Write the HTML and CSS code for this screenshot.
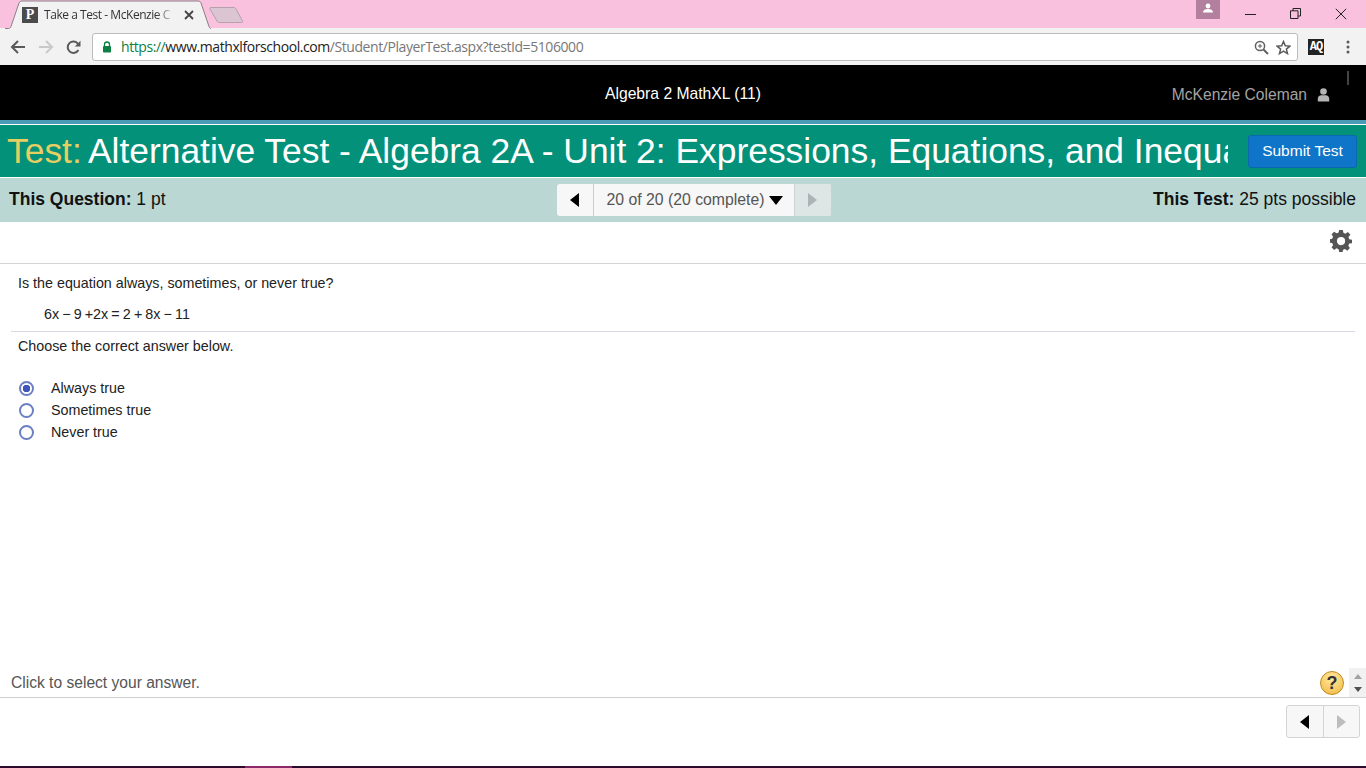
FILE: index.html
```html
<!DOCTYPE html>
<html lang="en">
<head>
<meta charset="utf-8">
<title>Take a Test - McKenzie Coleman</title>
<link rel="stylesheet" href="styles.css">
</head>
<body>
<div class="tabstrip">
  <div class="tab">
    <svg class="tab-shape" width="206" height="29" viewBox="0 0 206 29"><path d="M0 28.5H3.5C5 28.5 5.500 27.500 6 26.500L14 3C14.600 1.800 15.500 1 17 1H193C194.500 1 195.400 1.800 196 3L204 26.500C204.500 27.500 205 28.500 206 28.500" fill="#f2f2f2" stroke="#8a7f85"/></svg>
    <span class="favicon">P</span>
    <span class="tab-title">Take a Test - McKenzie C</span>
    <svg class="tab-close" width="10" height="10" viewBox="0 0 10 10"><path d="M1 1L9 9M9 1L1 9" stroke="#444" stroke-width="1.800"/></svg>
  </div>
  <svg class="newtab" width="36" height="18" viewBox="0 0 36 18"><path d="M2 1.500H25C26 1.500 26.500 2 27 3L33.500 15C34 16 33.500 16.500 32.500 16.500H10C9 16.500 8.500 16 8 15L1 3C.6 2 1 1.500 2 1.500Z" fill="#dcc5d2" stroke="#b5a0ac"/></svg>
  <div class="spacer"></div>
  <div class="profile"><svg width="12" height="10" viewBox="0 0 12 10"><circle cx="6" cy="3" r="2.400" fill="#fff"/><path d="M1 9.500C1 7 3.500 6 6 6S11 7 11 9.500Z" fill="#fff"/></svg></div>
  <div class="winbtn"><svg width="11" height="11" viewBox="0 0 11 11"><path d="M0 6.500H11" stroke="#222"/></svg></div>
  <div class="winbtn"><svg width="11" height="11" viewBox="0 0 11 11"><path d="M.5 2.800H8V10.500H.5ZM3 2.800V.5H10.500V8H8" fill="none" stroke="#222"/></svg></div>
  <div class="winbtn"><svg width="12" height="12" viewBox="0 0 12 12"><path d="M.8 .8L11.200 11.200M11.200 .8L.8 11.200" stroke="#222"/></svg></div>
</div>

<div class="toolbar">
  <svg class="nav-icon" width="16" height="14" viewBox="0 0 16 14"><path d="M15 7H2.500M8 1L2 7L8 13" fill="none" stroke="#5a5a5a" stroke-width="2"/></svg>
  <svg class="nav-icon" width="16" height="14" viewBox="0 0 16 14"><path d="M1 7H13.500M8 1L14 7L8 13" fill="none" stroke="#c9c9c9" stroke-width="2"/></svg>
  <svg class="nav-icon" width="15" height="15" viewBox="0 0 15 15"><path d="M12.400 10A5.700 5.700 0 1 1 12 3.800" fill="none" stroke="#5a5a5a" stroke-width="2"/><path d="M14.500 .8V6.500H8.800Z" fill="#5a5a5a"/></svg>
  <div class="omnibox">
    <svg class="lock" width="10" height="12" viewBox="0 0 10 12"><path d="M2.500 5V3.500a2.500 2.500 0 0 1 5 0V5" fill="none" stroke="#0b8043" stroke-width="1.300"/><rect x="1" y="5" width="8" height="6.500" rx=".8" fill="#0b8043"/></svg>
    <span class="url"><span class="url-scheme">https://</span><span class="url-host">www.mathxlforschool.com</span><span class="url-path">/Student/PlayerTest.aspx?testId=5106000</span></span>
    <svg class="zoom-icon" width="15" height="15" viewBox="0 0 15 15"><circle cx="6" cy="6" r="4.600" fill="none" stroke="#5f5f5f" stroke-width="1.500"/><path d="M9.500 9.500L14 14" stroke="#5f5f5f" stroke-width="2"/><path d="M3.800 6H8.200M6 3.800V8.200" stroke="#5f5f5f"/></svg>
    <svg class="star-icon" width="15" height="15" viewBox="0 0 15 15"><path d="M7.500 1.500L9.300 5.700L13.900 6.100L10.400 9.100L11.500 13.600L7.500 11.200L3.500 13.600L4.600 9.100L1.100 6.100L5.700 5.700Z" fill="none" stroke="#5a5a5a" stroke-width="1.500"/></svg>
  </div>
  <span class="ext">AQ</span>
  <svg class="menu-dots" width="4" height="14" viewBox="0 0 4 14"><circle cx="2" cy="2" r="1.500" fill="#5a5a5a"/><circle cx="2" cy="7" r="1.500" fill="#5a5a5a"/><circle cx="2" cy="12" r="1.500" fill="#5a5a5a"/></svg>
</div>

<header class="site-header">
  <div class="course">Algebra 2 MathXL (11)</div>
  <div class="user">
    <span>McKenzie Coleman</span>
    <svg width="13" height="14" viewBox="0 0 13 14"><circle cx="6.500" cy="3.500" r="3.300" fill="#b5b5b5"/><path d="M.8 13.500V10.500C.8 8.500 2.500 7.200 4 7.200H9C10.500 7.200 12.200 8.500 12.200 10.500V13.500Z" fill="#b5b5b5"/></svg>
  </div>
  <span class="header-tick"></span>
</header>

<section class="title-bar">
  <h1 class="test-title"><span class="test-label">Test:</span> Alternative Test - Algebra 2A - Unit 2: Expressions, Equations, and Inequa</h1>
  <button class="submit">Submit Test</button>
</section>

<section class="status-bar">
  <div class="status-left"><b>This Question:</b> 1 pt</div>
  <div class="pager">
    <span class="pager-arrow"><i class="tri-left"></i></span>
    <span class="pager-label">20 of 20 (20 complete)<i class="tri-down"></i></span>
    <span class="pager-arrow disabled"><i class="tri-right"></i></span>
  </div>
  <div class="status-right"><b>This Test:</b> 25 pts possible</div>
</section>

<div class="tools">
  <svg width="22" height="22" viewBox="0 0 24 24"><path fill="#555" fill-rule="evenodd" d="M10 1h4l.6 3a8.500 8.500 0 0 1 2.300 1l2.600-1.700 2.800 2.800L20 8.700a8.500 8.500 0 0 1 1 2.300l3 .6v3.800l-3 .4a8.500 8.500 0 0 1-1 2.300l1.700 2.600-2.800 2.800-2.600-1.700a8.500 8.500 0 0 1-2.300 1L14 25h-4l-.6-3a8.500 8.500 0 0 1-2.300-1l-2.600 1.700-2.800-2.800L3.400 17.500a8.500 8.500 0 0 1-1-2.300L0 14.800V11l2.400-.4a8.500 8.500 0 0 1 1-2.300L1.700 5.700l2.800-2.800L7.100 4.600a8.500 8.500 0 0 1 2.300-1ZM12 8.500a4.500 4.500 0 1 0 0 9 4.500 4.500 0 0 0 0-9Z" transform="translate(0 -1)"/></svg>
</div>

<main class="question">
  <p class="prompt">Is the equation always, sometimes, or never true?</p>
  <p class="equation">6x − 9 +2x = 2 + 8x − 11</p>
  <p class="choose">Choose the correct answer below.</p>
  <ul class="options">
    <li class="option"><span class="radio checked"></span>Always true</li>
    <li class="option"><span class="radio"></span>Sometimes true</li>
    <li class="option"><span class="radio"></span>Never true</li>
  </ul>
</main>

<div class="hint-bar">
  <span class="hint">Click to select your answer.</span>
  <span class="help">?</span>
  <div class="scroller"><i class="sc-up"></i><i class="sc-down"></i></div>
</div>

<footer class="footer">
  <div class="foot-pager">
    <span class="foot-btn"><i class="tri-left"></i></span>
    <span class="foot-btn disabled"><i class="tri-right"></i></span>
  </div>
</footer>
<div class="taskbar"></div>
</body>
</html>
```

FILE: styles.css
```css
* { box-sizing: border-box; }
html, body { margin: 0; padding: 0; }
body {
  width: 1366px;
  height: 768px;
  overflow: hidden;
  display: flex;
  flex-direction: column;
  background: #fff;
  color: #222;
  font-family: "Liberation Sans", Arial, sans-serif;
}

/* browser chrome */
.tabstrip {
  height: 28px;
  flex: none;
  display: flex;
  align-items: flex-start;
  background: #f9c1de;
  padding: 0 3px 0 5px;
}
.tab {
  position: relative;
  width: 206px;
  height: 29px;
  flex: none;
  display: flex;
  align-items: center;
  padding: 1px 0 0 17px;
  z-index: 1;
}
.tab-shape { position: absolute; left: 0; top: 0; }
.favicon {
  position: relative;
  width: 16px;
  height: 16px;
  background: #4b4b4b;
  color: #fff;
  font: 700 14px/16px "Liberation Serif", serif;
  text-align: center;
}
.tab-title {
  position: relative;
  margin-left: 6px;
  width: 134px;
  font: 12px/16px "Open Sans", sans-serif;
  letter-spacing: -.45px;
  color: #333;
  white-space: nowrap;
  overflow: hidden;
  -webkit-mask-image: linear-gradient(90deg, #000 112px, transparent 132px);
  mask-image: linear-gradient(90deg, #000 112px, transparent 132px);
}
.tab-close { position: relative; margin-left: 6px; }
.newtab { margin: 6px 0 0 -2px; flex: none; }
.spacer { flex: 1; }
.profile {
  width: 24px;
  height: 19px;
  background: #b27f9e;
  display: flex;
  justify-content: center;
  padding-top: 3px;
  margin-right: 8px;
}
.winbtn {
  width: 45px;
  height: 27px;
  display: flex;
  align-items: center;
  justify-content: center;
}
.toolbar {
  height: 37px;
  flex: none;
  display: flex;
  align-items: center;
  background: #f2f2f2;
  padding: 1px 0 0 10px;
}
.nav-icon { flex: none; margin-right: 12px; }
.nav-icon + .nav-icon + .nav-icon { margin-left: 0; margin-right: 11px; }
.omnibox {
  width: 1206px;
  height: 28px;
  flex: none;
  display: flex;
  align-items: center;
  background: #fff;
  border: 1px solid #bcbcbc;
  border-radius: 3px;
  padding: 0 6px 0 9px;
}
.lock { flex: none; }
.url {
  flex: 1;
  margin-left: 9px;
  font: 14px/18px "Open Sans", sans-serif;
  letter-spacing: -.43px;
  white-space: nowrap;
}
.url-scheme { color: #0b8043; }
.url-host { color: #222; }
.url-path { color: #777; }
.zoom-icon { margin-right: 7px; }
.ext {
  width: 16px;
  height: 16px;
  margin-left: 10px;
  background: #222;
  color: #fff;
  font: 700 12px/16px "Liberation Mono", monospace;
  letter-spacing: -1px;
  text-align: center;
  flex: none;
}
.menu-dots { margin-left: 22px; flex: none; }

/* site header */
.site-header {
  height: 55px;
  flex: none;
  position: relative;
  background: #000;
  display: flex;
  align-items: center;
  justify-content: center;
  padding-top: 2px;
}
.course {
  color: #fff;
  font-size: 15.700px;
}
.user {
  position: absolute;
  right: 36px;
  top: 21px;
  display: flex;
  align-items: center;
  gap: 10px;
  color: #a3a3a3;
  font-size: 15.600px;
}
.header-tick {
  position: absolute;
  right: 17px;
  top: 6px;
  width: 2px;
  height: 14px;
  background: #444;
}

/* title */
.title-bar {
  height: 58px;
  flex: none;
  display: flex;
  align-items: center;
  background: #03917a;
  border-top: 4px solid #4a9bb6;
  box-shadow: inset 0 1px 0 #fff, inset 0 -1px 0 #fff;
  padding: 0 9px 0 7px;
}
.test-title {
  width: 1221px;
  margin: 0;
  flex: none;
  font-weight: 400;
  font-size: 35.400px;
  line-height: 50px;
  color: #fff;
  white-space: nowrap;
  overflow: hidden;
}
.test-label { color: #e6cf62; margin-right: -1.700px; }
.submit {
  margin-left: 20px;
  width: 109px;
  height: 33px;
  flex: none;
  border: 1px solid #0a67b0;
  border-radius: 3px;
  background: #0f75c9;
  color: #fff;
  font: 15.500px "Liberation Sans", Arial, sans-serif;
  padding: 0;
}

/* status */
.status-bar {
  height: 44px;
  flex: none;
  display: grid;
  grid-template-columns: 1fr auto 1fr;
  align-items: center;
  background: #bad7d3;
  padding: 0 10px 0 9px;
  font-size: 17.500px;
  color: #111;
}
.status-bar b { font-weight: 700; }
.status-left { padding-bottom: 2px; }
.status-right { text-align: right; padding-bottom: 2px; }
.pager {
  display: flex;
  height: 32px;
  margin-left: 22px;
  background: #f7f7f7;
  border-radius: 3px;
  overflow: hidden;
}
.pager-arrow {
  width: 36px;
  display: flex;
  align-items: center;
  justify-content: center;
}
.pager-arrow.disabled {
  width: 37px;
  background: #dde6e5;
  border-left: 1px solid #c9d3d2;
}
.pager-label {
  width: 201px;
  border-left: 1px solid #ccc;
  display: flex;
  align-items: center;
  justify-content: center;
  font-size: 15.800px;
  color: #555;
  padding-left: 2px;
}
.tri-left, .tri-right, .tri-down { display: block; width: 0; height: 0; }
.tri-left {
  border-top: 7px solid transparent;
  border-bottom: 7px solid transparent;
  border-right: 9px solid #000;
}
.tri-right {
  border-top: 7px solid transparent;
  border-bottom: 7px solid transparent;
  border-left: 9px solid #a9b6b5;
}
.tri-down {
  margin-left: 4px;
  border-left: 7px solid transparent;
  border-right: 7px solid transparent;
  border-top: 9px solid #000;
}

/* tools */
.tools {
  height: 42px;
  flex: none;
  display: flex;
  align-items: center;
  justify-content: flex-end;
  padding: 0 14px 3px 0;
  border-bottom: 1px solid #d4d4d4;
}

/* question */
.question {
  flex: 1;
  padding: 0 11px;
  font-size: 14.300px;
  color: #222;
}
.prompt { margin: 11px 0 0 7px; line-height: 17px; }
.equation {
  margin: 14px 0 0;
  padding: 0 0 8px 33px;
  line-height: 17px;
  border-bottom: 1px solid #d6d8e2;
  word-spacing: -.85px;
}
.choose { margin: 6px 0 0 7px; line-height: 17px; }
.options { list-style: none; margin: 22px 0 0; padding: 0 0 0 8px; }
.option {
  height: 22px;
  display: flex;
  align-items: center;
}
.radio {
  width: 15px;
  height: 15px;
  margin-right: 17px;
  border: 2px solid #6b7fc4;
  border-radius: 50%;
  background: #fff;
  flex: none;
}
.radio.checked {
  background: radial-gradient(circle, #3d56b8 0 3.500px, #fff 4px);
}

/* bottom */
.hint-bar {
  height: 30px;
  flex: none;
  display: flex;
  align-items: center;
  padding-left: 11px;
  border-bottom: 1px solid #cfcfcf;
}
.hint { flex: 1; font-size: 15.600px; color: #555; }
.help {
  width: 24px;
  height: 24px;
  margin-right: 5px;
  border-radius: 50%;
  border: 1px solid #c08a1e;
  background: radial-gradient(circle at 50% 30%, #ffeaa0, #f2b640);
  color: #333;
  font: 700 18px/22px "Liberation Sans", Arial, sans-serif;
  text-align: center;
}
.scroller {
  width: 17px;
  height: 29px;
  background: #f1f1f1;
  display: flex;
  flex-direction: column;
  align-items: center;
  justify-content: space-between;
  padding: 6px 0 5px;
}
.sc-up {
  border-left: 4px solid transparent;
  border-right: 4px solid transparent;
  border-bottom: 5px solid #a3a3a3;
}
.sc-down {
  border-left: 4px solid transparent;
  border-right: 4px solid transparent;
  border-top: 5px solid #505050;
}
.footer {
  height: 68px;
  flex: none;
  display: flex;
  justify-content: flex-end;
  padding: 7px 6px 0 0;
}
.foot-pager {
  display: flex;
  width: 74px;
  height: 33px;
  background: #f7f7f7;
  border: 1px solid #d4d4d4;
  border-radius: 3px;
}
.foot-btn {
  flex: 1;
  display: flex;
  align-items: center;
  justify-content: center;
}
.foot-btn.disabled { border-left: 1px solid #d4d4d4; }
.foot-btn .tri-right { border-left-color: #bdbdbd; }
.taskbar {
  height: 2px;
  flex: none;
  background: linear-gradient(90deg, #2b0a2c 0 245px, #8a2a6a 245px 292px, #2b0a2c 292px);
}
```
